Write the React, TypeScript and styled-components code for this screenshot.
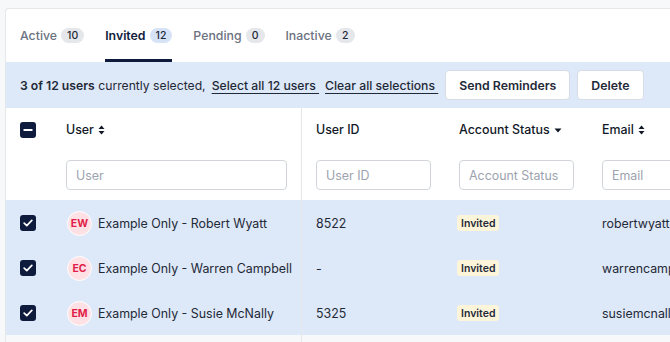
import React from "react";
import styled, { createGlobalStyle } from "styled-components";

const Global = createGlobalStyle`
  html, body { margin: 0; padding: 0; background: #f7f8fa; overflow: hidden; }
  body { font-family: Inter, "Noto Sans", Arial, sans-serif; color: #1f2937; }
  * { box-sizing: border-box; }
`;

const Page = styled.div`
  padding: 8px 0 0 5px;
  width: 670px;
  height: 342px;
  overflow: hidden;
`;

const Card = styled.div`
  width: 820px;
  background: #fff;
  border: 1px solid #e5e7eb;
  border-right: none;
  border-radius: 4px 0 0 0;
`;

const Tabs = styled.div`
  display: flex;
  gap: 21px;
  padding: 0 14px;
  height: 53px;
`;

const Tab = styled.div<{ $active?: boolean }>`
  display: flex;
  align-items: center;
  gap: 4px;
  height: 100%;
  font-size: 12.3px;
  font-weight: ${(p) => (p.$active ? 600 : 500)};
  color: ${(p) => (p.$active ? "#0f1b3d" : "#6b7280")};
  border-bottom: 3px solid ${(p) => (p.$active ? "#0f1b3d" : "transparent")};
  padding-top: 2px;
`;

const Count = styled.span<{ $active?: boolean }>`
  display: inline-flex;
  align-items: center;
  justify-content: center;
  min-width: 19px;
  height: 15px;
  padding: 0 6px;
  border-radius: 8px;
  font-size: 10.5px;
  font-weight: 500;
  color: #1f2937;
  background: ${(p) => (p.$active ? "#d6e3f7" : "#e5e7eb")};
`;

const SelBar = styled.div`
  display: flex;
  align-items: center;
  height: 46px;
  padding: 0 14px;
  background: #dde8f8;
  font-size: 12.2px;
  color: #1f2937;
`;

const Strong = styled.b`
  font-weight: 600;
`;

const LinkText = styled.span`
  text-decoration: underline;
  text-decoration-thickness: 1px;
  text-underline-offset: 3px;
  font-weight: 500;
  margin-left: 6px;
  white-space: pre;
`;

const Button = styled.button`
  height: 30px;
  margin-left: 7px;
  padding: 0 13px;
  background: #fff;
  border: 1px solid #d8dde5;
  border-radius: 4px;
  font-family: inherit;
  font-size: 12.3px;
  font-weight: 600;
  color: #1f2937;
`;

const Grid = styled.div`
  display: grid;
  grid-template-columns: 46px 250px 143px 143px 1fr;
`;

const HeadCell = styled.div<{ $divider?: boolean }>`
  background: #fff;
  padding: 0 14px;
  height: 92px;
  display: flex;
  flex-direction: column;
  border-right: ${(p) => (p.$divider ? "1px solid #e5e7eb" : "none")};
`;

const HeadLabel = styled.div`
  display: flex;
  align-items: center;
  gap: 4px;
  height: 42px;
  padding-top: 1px;
  font-size: 12.4px;
  font-weight: 500;
  color: #111827;
  white-space: nowrap;
`;

const Filter = styled.input`
  margin-top: 10px;
  height: 30px;
  width: 100%;
  border: 1px solid #d1d5db;
  border-radius: 4px;
  padding: 0 9px;
  font-family: inherit;
  font-size: 12.4px;
  color: #374151;
  background: #fff;
  &::placeholder { color: #9ca3af; }
`;

const CheckBox = styled.span`
  display: inline-flex;
  align-items: center;
  justify-content: center;
  width: 16px;
  height: 16px;
  border-radius: 3px;
  background: #0f1b3d;
`;

const CheckHead = styled.div`
  height: 42px;
  display: flex;
  align-items: center;
  padding-top: 1px;
`;

const Cell = styled.div<{ $divider?: boolean }>`
  display: flex;
  align-items: center;
  height: 45px;
  padding: 1px 14px 0;
  background: #dde8f8;
  font-size: 12.4px;
  color: #1f2937;
  white-space: nowrap;
  overflow: hidden;
  border-right: ${(p) => (p.$divider ? "1px solid #e5e7eb" : "none")};
`;

const EmptyCell = styled.div<{ $divider?: boolean }>`
  height: 10px;
  background: #f7f8fa;
  border-right: ${(p) => (p.$divider ? "1px solid #e5e7eb" : "none")};
`;

const Avatar = styled.span`
  display: inline-flex;
  align-items: center;
  justify-content: center;
  width: 25px;
  height: 25px;
  border-radius: 50%;
  background: #fde1e4;
  border: 1px solid #fff;
  color: #e11d48;
  font-size: 10.5px;
  font-weight: 700;
  margin-left: 1px;
  margin-right: 6px;
  flex-shrink: 0;
`;

const Status = styled.span`
  display: inline-flex;
  align-items: center;
  height: 16px;
  padding: 0 4px;
  margin-left: -2px;
  border-radius: 3px;
  background: #fdf5da;
  font-size: 10.5px;
  font-weight: 600;
  color: #1f2937;
`;

const SortIcon = () => (
  <svg width="7" height="10" viewBox="0 0 7 10">
    <path d="M3.5 0.5 L6.5 4 H0.5 Z" fill="#111827" />
    <path d="M3.5 9.5 L6.5 6 H0.5 Z" fill="#111827" />
  </svg>
);

const DownIcon = () => (
  <svg width="8" height="5" viewBox="0 0 8 5" style={{ marginTop: 1 }}>
    <path d="M0.5 0.5 H7.5 L4 4.5 Z" fill="#111827" />
  </svg>
);

const Check = () => (
  <svg width="10" height="8" viewBox="0 0 10 8">
    <path d="M1.2 4.2 L3.8 6.6 L8.8 1.4" fill="none" stroke="#fff" strokeWidth="1.7" strokeLinecap="round" strokeLinejoin="round" />
  </svg>
);

const Minus = () => (
  <svg width="10" height="4" viewBox="0 0 10 4">
    <rect x="0.5" y="1" width="9" height="2" rx="0.6" fill="#fff" />
  </svg>
);

const rows = [
  { initials: "EW", name: "Example Only - Robert Wyatt", id: "8522", email: "robertwyatt@example.com" },
  { initials: "EC", name: "Example Only - Warren Campbell", id: "-", email: "warrencampbell@example.com" },
  { initials: "EM", name: "Example Only - Susie McNally", id: "5325", email: "susiemcnally@example.com" },
];

const tabs = [
  { label: "Active", count: 10 },
  { label: "Invited", count: 12, active: true },
  { label: "Pending", count: 0 },
  { label: "Inactive", count: 2 },
];

export default function App() {
  return (
    <Page>
      <Global />
      <Card>
        <Tabs>
          {tabs.map((t) => (
            <Tab key={t.label} $active={t.active}>
              {t.label}
              <Count $active={t.active}>{t.count}</Count>
            </Tab>
          ))}
        </Tabs>
        <SelBar>
          <Strong>3 of 12 users</Strong>&nbsp;currently selected,
          <LinkText>Select all 12 users </LinkText>
          <LinkText>Clear all selections </LinkText>
          <Button>Send Reminders</Button>
          <Button>Delete</Button>
        </SelBar>
        <Grid>
          <HeadCell>
            <CheckHead>
              <CheckBox><Minus /></CheckBox>
            </CheckHead>
          </HeadCell>
          <HeadCell $divider>
            <HeadLabel>User <SortIcon /></HeadLabel>
            <Filter placeholder="User" />
          </HeadCell>
          <HeadCell>
            <HeadLabel>User ID</HeadLabel>
            <Filter placeholder="User ID" />
          </HeadCell>
          <HeadCell>
            <HeadLabel>Account Status <DownIcon /></HeadLabel>
            <Filter placeholder="Account Status" />
          </HeadCell>
          <HeadCell>
            <HeadLabel>Email <SortIcon /></HeadLabel>
            <Filter placeholder="Email" style={{ width: 160 }} />
          </HeadCell>
          {rows.map((r) => (
            <React.Fragment key={r.initials}>
              <Cell><CheckBox><Check /></CheckBox></Cell>
              <Cell $divider>
                <Avatar>{r.initials}</Avatar>
                {r.name}
              </Cell>
              <Cell>{r.id}</Cell>
              <Cell><Status>Invited</Status></Cell>
              <Cell>{r.email}</Cell>
            </React.Fragment>
          ))}
          <EmptyCell />
          <EmptyCell $divider />
          <EmptyCell />
          <EmptyCell />
          <EmptyCell />
        </Grid>
      </Card>
    </Page>
  );
}
